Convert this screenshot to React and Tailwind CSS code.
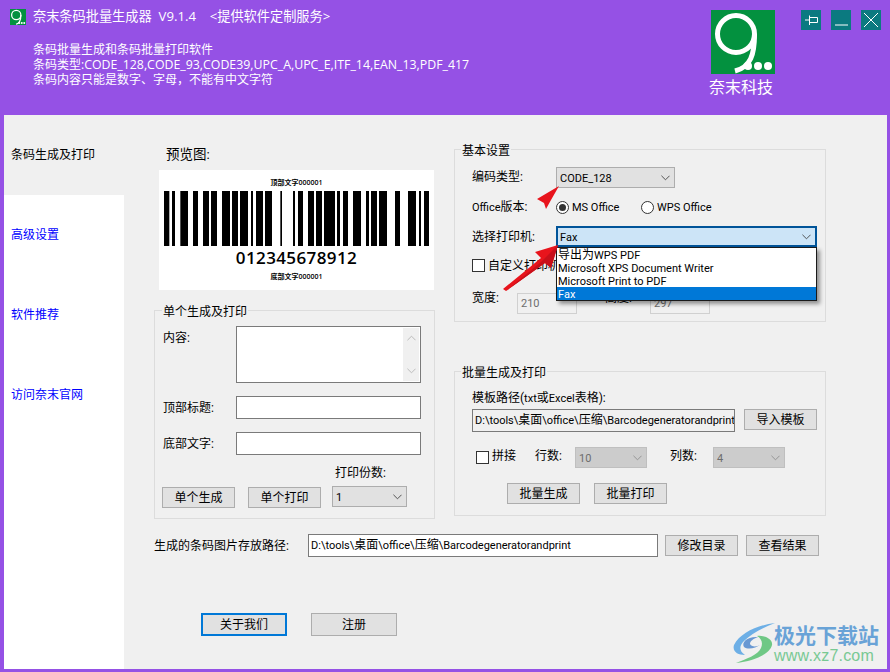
import React from 'react';

const BARS = [
  [492, 508], [516, 525], [541, 564], [579, 594], [609, 627], [633, 651], [666, 690], [696, 714],
  [720, 744], [753, 759], [768, 789], [795, 816], [841, 846], [879, 885], [894, 909], [924, 942],
  [948, 966], [972, 1005], [1011, 1020], [1029, 1044], [1059, 1083], [1098, 1107], [1113, 1131],
  [1137, 1161], [1185, 1200], [1224, 1248], [1257, 1263], [1272, 1287],
];

// latin runs in the window body are narrower than the CJK around them
function L({ children }) {
  return <span className="text-[11px] font-['Roboto',sans-serif]">{children}</span>;
}

function Logo({ className }) {
  return (
    <svg viewBox="0 0 64 64" className={className}>
      <rect width="64" height="64" fill="#03913f" />
      <circle cx="25" cy="24" r="18.5" fill="none" stroke="#fff" strokeWidth="5" />
      <path d="M43.5 24 C43.5 44 40 57 24 61" fill="none" stroke="#fff" strokeWidth="5" />
      <circle cx="37" cy="56" r="4" fill="#fff" />
      <circle cx="47" cy="56" r="4" fill="#fff" />
      <circle cx="57" cy="56" r="4" fill="#fff" />
    </svg>
  );
}

function WinBtn({ children }) {
  return (
    <div className="w-5 h-5 bg-[#0b7a80] flex items-center justify-center">
      <svg viewBox="0 0 20 20" className="w-5 h-5" fill="none" stroke="#fff" strokeWidth="1">
        {children}
      </svg>
    </div>
  );
}

function Chevron({ color = '#444' }) {
  return (
    <svg viewBox="0 0 10 6" className="w-[9px] h-[6px]" fill="none" stroke={color} strokeWidth="1">
      <path d="M0.5 0.5 L5 5 L9.5 0.5" />
    </svg>
  );
}

function Select({ value, className = '', disabled }) {
  return (
    <div
      className={`h-[21px] flex items-center justify-between pl-[3px] pr-[4px] border ${
        disabled ? 'bg-[#cccccc] border-[#bfbfbf] text-[#6d6d6d]' : 'bg-[#e1e1e1] border-[#adadad] text-black'
      } ${className}`}
    >
      <span className="pt-[1px]"><L>{value}</L></span>
      <Chevron color={disabled ? '#8f8f8f' : '#444'} />
    </div>
  );
}

function Btn({ children, className = '' }) {
  return (
    <button className={`w-[73px] h-[21px] bg-[#e1e1e1] border border-[#adadad] text-[12px] leading-none text-black ${className}`}>
      {children}
    </button>
  );
}

function Group({ title, className = '', legendClass = 'left-[6px]', children }) {
  return (
    <div className={`relative border border-[#dcdcdc] ${className}`}>
      <span className={`absolute top-[-7px] bg-[#f0f0f0] px-[1px] leading-[16px] ${legendClass}`}>{title}</span>
      {children}
    </div>
  );
}

function Radio({ checked, label, className = '' }) {
  return (
    <div className={`flex items-center ${className}`}>
      <span className="w-[13px] h-[13px] rounded-full border border-[#333] bg-white flex items-center justify-center">
        {checked && <span className="w-[7px] h-[7px] rounded-full bg-[#333]" />}
      </span>
      <span className="ml-[3px]"><L>{label}</L></span>
    </div>
  );
}

function Field({ label, className = '' }) {
  return (
    <div className={`flex items-center h-[23px] ${className}`}>
      <span className="w-[73px]">{label}</span>
      <div className="w-[185px] h-[23px] bg-white border border-[#7a7a7a]" />
    </div>
  );
}

export default function App() {
  return (
    <div className="relative w-[890px] h-[672px] flex flex-col bg-[#9551e5] overflow-hidden text-[12px] leading-[16px] text-black font-['Roboto','Noto_Sans_CJK_SC',sans-serif]">
      {/* header */}
      <div className="h-[115px] shrink-0 flex text-white font-['Open_Sans','Noto_Sans_CJK_SC',sans-serif]">
        <div className="pl-[10px] pt-[8px] flex-1">
          <div className="flex items-center h-[16px]">
            <Logo className="w-4 h-4 mt-[1px]" />
            <span className="ml-[7px] text-[13.2px] whitespace-pre">奈末条码批量生成器  V9.1.4    &lt;提供软件定制服务&gt;</span>
          </div>
          <div className="mt-[18px] ml-[23px] leading-[15px]">
            <div>条码批量生成和条码批量打印软件</div>
            <div>条码类型:<span className="text-[12.35px]">CODE_128,CODE_93,CODE39,UPC_A,UPC_E,ITF_14,EAN_13,PDF_417</span></div>
            <div>条码内容只能是数字、字母，不能有中文字符</div>
          </div>
        </div>
        <div className="w-[64px] mr-[26px] pt-[10px] flex flex-col items-center">
          <Logo className="w-16 h-16 shrink-0" />
          <span className="mt-[3px] -ml-[4px] text-[16px] leading-[20px] whitespace-nowrap">奈末科技</span>
        </div>
        <div className="flex gap-[10px] pt-[10px] pr-[9px]">
          <WinBtn><path d="M4 10 H8.5 M8.5 5.5 V15 M8.5 7.5 H16.5 V12.5 H8.5" /></WinBtn>
          <WinBtn><path d="M4 15 H17" /></WinBtn>
          <WinBtn><path d="M3 3 L17 17 M17 3 L3 17" /></WinBtn>
        </div>
      </div>

      {/* body */}
      <div className="flex-1 ml-[4px] mr-[3px] mb-[3px] flex bg-[#f0f0f0] min-h-0">
        <div className="w-[120px] shrink-0 flex flex-col">
          <div className="h-[80px] flex items-center pl-[7px]">条码生成及打印</div>
          <div className="flex-1 bg-white text-[#0000ff]">
            <div className="h-[80px] flex items-center pl-[7px]">高级设置</div>
            <div className="h-[80px] flex items-center pl-[7px]">软件推荐</div>
            <div className="h-[80px] flex items-center pl-[7px]">访问奈末官网</div>
          </div>
        </div>

        <div className="flex-1 pl-[30px]">
          <div className="flex">
            {/* left column */}
            <div className="w-[281px] pt-[31px]">
              <div className="ml-[12px] h-4 text-[13.5px]">预览图:</div>
              <div className="mt-[8px] ml-[5px] w-[275px] h-[120px] bg-white flex flex-col items-center pt-[8px] font-['Open_Sans','Noto_Sans_CJK_SC',sans-serif]">
                <div className="text-[7px] leading-[9px] font-semibold">顶部文字000001</div>
                <svg viewBox="492 0 795 165" className="mt-[4px] w-[265px] h-[55px]">
                  {BARS.map(([a, b]) => (
                    <rect key={a} x={a} y="0" width={b - a} height="165" fill="#000" />
                  ))}
                </svg>
                <div className="mt-[1px] text-[17px] leading-[22px] font-semibold tracking-[0.4px]">012345678912</div>
                <div className="mt-[3px] text-[7px] leading-[9px] font-semibold">底部文字000001</div>
              </div>

              <Group title="单个生成及打印" legendClass="left-[7px]" className="mt-[20px] h-[209px] pl-[8px] pt-[15px]">
                <div className="flex">
                  <span className="w-[73px] pt-[4px]">内容:</span>
                  <div className="w-[185px] h-[57px] bg-white border border-[#7a7a7a] flex justify-end pr-[1px] py-[1px]">
                    <div className="w-4 bg-[#f0f0f0] flex flex-col items-center justify-between py-[7px]">
                      <div className="rotate-180 flex"><Chevron color="#b5b5b5" /></div>
                      <Chevron color="#b5b5b5" />
                    </div>
                  </div>
                </div>
                <Field label="顶部标题:" className="mt-[13px]" />
                <Field label="底部文字:" className="mt-[13px]" />
                <div className="mt-[10px] ml-[172px] h-4">打印份数:</div>
                <div className="mt-[5px] flex items-start">
                  <Btn className="mt-[1px] -ml-[1px]">单个生成</Btn>
                  <Btn className="mt-[1px] ml-[13px]">单个打印</Btn>
                  <Select value="1" className="ml-[11px] w-[75px]" />
                </div>
              </Group>
            </div>

            {/* right column */}
            <div className="ml-[19px] w-[372px] pt-[34px]">
              <Group title="基本设置" className="h-[173px] pl-[17px] pt-[17px]">
                <div className="flex items-center">
                  <span className="w-[84px] -mt-[2px]">编码类型:</span>
                  <Select value="CODE_128" className="w-[119px]" />
                </div>
                <div className="flex items-center h-[13px] mt-[13px]">
                  <span className="w-[84px]"><L>Office</L>版本:</span>
                  <Radio checked label="MS Office" className="w-[85px]" />
                  <Radio label="WPS Office" />
                </div>
                <div className="flex items-center mt-[12px] relative">
                  <span className="w-[84px]">选择打印机:</span>
                  <div className="relative w-[261px] h-[21px] bg-[#cce4f7] border-2 border-[#005499] flex items-center justify-between pl-[2px] pr-[4px]">
                    <span className="pt-[2px]"><L>Fax</L></span>
                    <Chevron />
                    <div className="absolute z-10 left-[-2px] top-[19px] w-[261px] bg-white border border-[#1a1a1a] leading-[15px] shadow-[3px_3px_4px_rgba(0,0,0,0.4)]">
                      <div className="h-[13px] pl-[1px]">导出为<L>WPS PDF</L></div>
                      <div className="h-[13px] pl-[1px]"><L>Microsoft XPS Document Writer</L></div>
                      <div className="h-[13px] pl-[1px]"><L>Microsoft Print to PDF</L></div>
                      <div className="h-[13px] pl-[1px] bg-[#0078d7] text-white"><L>Fax</L></div>
                    </div>
                  </div>
                </div>
                <div className="flex items-center mt-[12px] h-[13px]">
                  <span className="w-[13px] h-[13px] border border-[#333] bg-white" />
                  <span className="ml-[3px]">自定义打印机</span>
                </div>
                <div className="flex items-start mt-[21px]">
                  <span className="w-[45px] -mt-[3px]">宽度:</span>
                  <div className="w-[60px] h-[21px] border border-[#d0d0d0] pl-[3px] flex items-center text-[#6d6d6d]"><L>210</L></div>
                  <span className="ml-[28px] w-[45px] -mt-[3px]">高度:</span>
                  <div className="w-[60px] h-[21px] border border-[#d0d0d0] pl-[3px] flex items-center text-[#6d6d6d]"><L>297</L></div>
                </div>
              </Group>

              <Group title="批量生成及打印" className="mt-[49px] h-[145px] pl-[17px] pt-[18px]">
                <div className="h-4">模板路径(<L>txt</L>或<L>Excel</L>表格):</div>
                <div className="mt-[3px] flex items-start">
                  <div className="w-[263px] h-[23px] border border-[#7a7a7a] pl-[2px] flex items-center whitespace-nowrap overflow-hidden">
                    <span><L>D:\tools\</L>桌面<L>\office\</L>压缩<L>\Barcodegeneratorandprint</L></span>
                  </div>
                  <Btn className="ml-[9px]">导入模板</Btn>
                </div>
                <div className="mt-[15px] flex items-center">
                  <span className="ml-[4px] w-[13px] h-[13px] border border-[#333] bg-white" />
                  <span className="ml-[3px] w-[43px] -mt-[3px]">拼接</span>
                  <span className="w-[40px] -mt-[3px]">行数:</span>
                  <Select disabled value="10" className="w-[72px]" />
                  <span className="ml-[23px] w-[43px] -mt-[3px]">列数:</span>
                  <Select disabled value="4" className="w-[72px]" />
                </div>
                <div className="mt-[15px] ml-[35px] flex gap-[14px]">
                  <Btn>批量生成</Btn>
                  <Btn>批量打印</Btn>
                </div>
              </Group>
            </div>
          </div>

          {/* path row */}
          <div className="mt-[15px] flex items-center">
            <span className="w-[154px] mt-[1px]">生成的条码图片存放路径:</span>
            <div className="w-[350px] h-[23px] bg-white border border-[#7a7a7a] pl-[2px] flex items-center whitespace-nowrap overflow-hidden">
              <span><L>D:\tools\</L>桌面<L>\office\</L>压缩<L>\Barcodegeneratorandprint</L></span>
            </div>
            <Btn className="ml-[7px]">修改目录</Btn>
            <Btn className="ml-[8px]">查看结果</Btn>
          </div>

          <div className="mt-[56px] ml-[47px] flex gap-[24px]">
            <button className="w-[86px] h-[23px] bg-[#e1e1e1] border-2 border-[#0078d7] text-[12px] leading-none">关于我们</button>
            <button className="w-[86px] h-[23px] bg-[#e1e1e1] border border-[#adadad] text-[12px] leading-none">注册</button>
          </div>
        </div>
      </div>

      {/* red annotation arrows */}
      <svg viewBox="0 0 890 672" className="absolute inset-0 z-20 w-[890px] h-[672px] pointer-events-none">
        <polygon points="559,186 537,199 544,203 546,209 551,200" fill="#e8141c" />
        <polygon points="558,245 535,252 541,258 503,289 506,291 545,263 551,268" fill="#e8141c" />
        <polygon points="558,245 551,268 545,263 506,291 541,262" fill="#c8101a" />
      </svg>

      {/* site watermark */}
      <div className="absolute z-20 left-[732px] top-[622px] flex opacity-90 font-['Open_Sans','Noto_Sans_CJK_SC',sans-serif]">
        <svg viewBox="0 0 44 42" className="w-[44px] h-[42px]">
          <path d="M43 1 C26 3 8 11 2 23 C0 30 6 33 13 33 C7 29 7 24 12 19 C19 12 30 6 43 1 Z" fill="#5fa9e6" />
          <path d="M26 15 C16 14 9 20 12 25 C16 28 24 26 28 23 C25 25 19 25 18 22 C18 19 21 17 26 15 Z" fill="#5a8fd0" />
          <path d="M25 14 C34 13 41 18 40 23 C38 32 22 39 4 41 C14 37 26 33 29 26 C31 21 30 17 25 14 Z" fill="#62c47a" />
        </svg>
        <div className="ml-[-2px] flex flex-col">
          <span className="text-[21px] leading-[26px] font-bold text-[#5b9bd5] whitespace-nowrap">极光下载站</span>
          <span className="mt-[1px] text-[16px] leading-[14px] text-[#6cc58a] font-['Liberation_Sans',sans-serif] tracking-[0.2px]">www.xz7.com</span>
        </div>
      </div>
    </div>
  );
}
